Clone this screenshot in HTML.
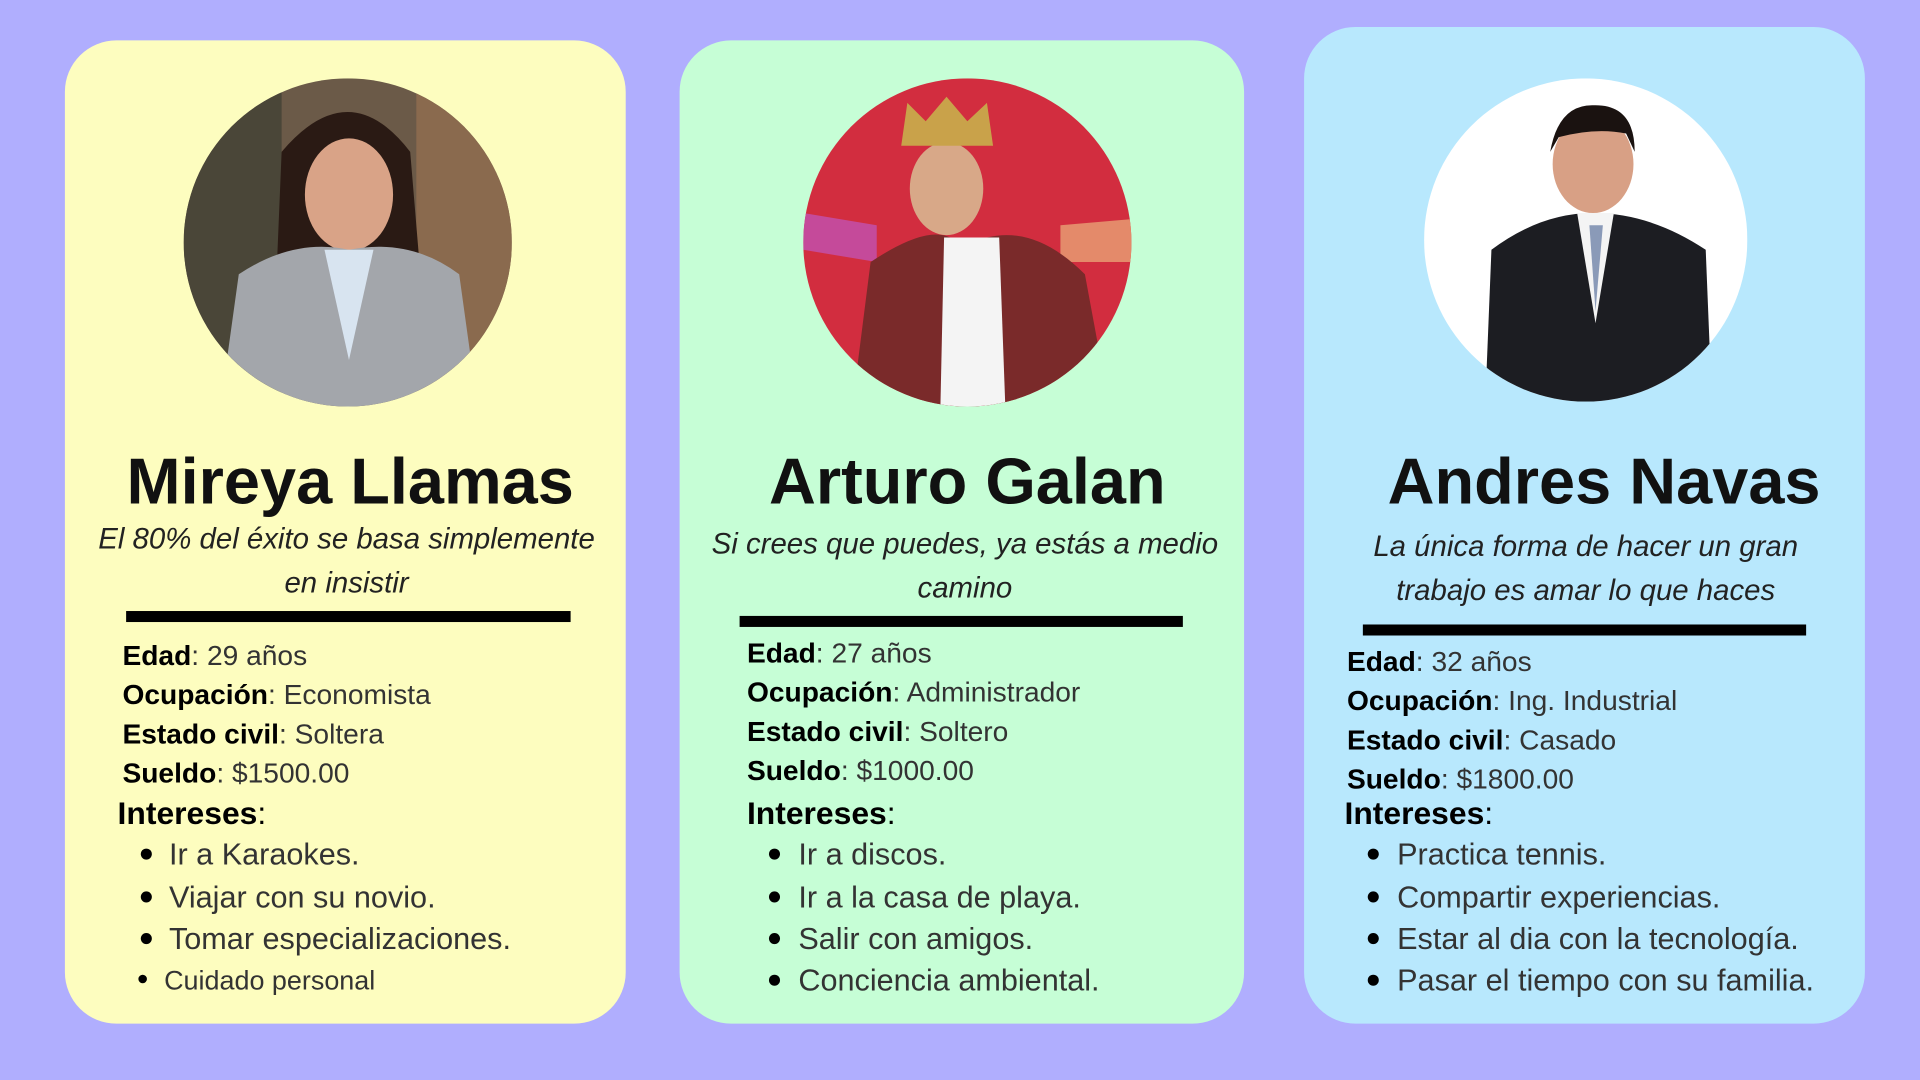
<!DOCTYPE html>
<html><head><meta charset="utf-8"><style>
html,body{margin:0;padding:0;width:1920px;height:1080px;overflow:hidden;background:#b0aefe;}
#s{position:absolute;left:0;top:0;width:1568px;height:882px;transform:scale(1.22449);transform-origin:0 0;font-family:"Liberation Sans",sans-serif;color:#111;}
.card{position:absolute;border-radius:42px;}
.a{position:absolute;white-space:nowrap;}
.name{font-weight:bold;font-size:53px;line-height:60px;text-align:center;transform:translateX(-50%);}
.q{font-style:italic;font-size:24px;line-height:36px;text-align:center;transform:translateX(-50%);color:#222;font-weight:300;}
.bar{position:absolute;height:9px;background:#000;}
.i{font-size:23px;line-height:30px;color:#333;}
.i b{color:#000;}
.h{font-size:26px;line-height:30px;font-weight:bold;color:#000;}
.li{font-size:25px;line-height:30px;color:#333;}
.dot{position:absolute;width:9px;height:9px;border-radius:50%;background:#000;}
</style></head><body><div id="s">
<div class="card" style="left:53px;top:33px;width:458px;height:803px;background:#fdfdbf"></div>
<div class="card" style="left:555px;top:33px;width:461px;height:803px;background:#c6fed6"></div>
<div class="card" style="left:1065px;top:22px;width:458px;height:814px;background:#b8e8fd"></div>

<svg class="a" style="left:150px;top:64px" width="268" height="268" viewBox="0 0 268 268">
<defs><clipPath id="c1"><circle cx="134" cy="134" r="134"/></clipPath></defs>
<g clip-path="url(#c1)"><rect width="268" height="268" fill="#6b5a48"/><rect x="0" y="0" width="80" height="268" fill="#4a4638"/><rect x="190" y="0" width="78" height="268" fill="#8a6a4e"/>
<path d="M80 60 Q135 -5 185 60 L195 180 L75 180Z" fill="#2a1a14"/>
<ellipse cx="135" cy="95" rx="36" ry="46" fill="#d9a387"/>
<path d="M30 268 L45 160 Q90 130 135 140 Q185 130 225 160 L240 268Z" fill="#a3a6ab"/>
<path d="M115 140 L135 230 L155 140Z" fill="#d8e4f0"/></g></svg>

<svg class="a" style="left:656px;top:64px" width="268" height="268" viewBox="0 0 268 268">
<defs><clipPath id="c2"><circle cx="134" cy="134" r="134"/></clipPath></defs>
<g clip-path="url(#c2)"><rect width="268" height="268" fill="#d22d3f"/>
<path d="M0 110 L60 120 L60 150 L0 140Z" fill="#c54a9a"/><path d="M210 120 L268 115 L268 150 L210 150Z" fill="#e48a6a"/>
<path d="M40 268 L55 150 Q100 120 120 130 L150 130 Q190 120 230 160 L250 268Z" fill="#7a2a2a"/>
<path d="M115 130 L160 130 L165 268 L112 268Z" fill="#f4f4f4"/>
<ellipse cx="117" cy="90" rx="30" ry="38" fill="#d8a888"/>
<path d="M80 55 L85 20 L100 35 L117 15 L134 35 L150 20 L155 55Z" fill="#c9a24a"/></g></svg>

<svg class="a" style="left:1163px;top:64px" width="264" height="264" viewBox="0 0 264 264">
<defs><clipPath id="c3"><circle cx="132" cy="132" r="132"/></clipPath></defs>
<g clip-path="url(#c3)"><rect width="264" height="264" fill="#fff"/>
<path d="M50 264 L55 140 Q95 110 138 110 Q185 110 230 140 L235 264Z" fill="#1c1d22"/>
<path d="M125 110 L140 200 L155 110Z" fill="#f4f4f4"/><path d="M135 120 L140 190 L146 120Z" fill="#8a9ab8"/>
<ellipse cx="138" cy="70" rx="33" ry="40" fill="#d8a085"/>
<path d="M103 60 Q110 20 140 22 Q172 22 172 60 L165 45 Q140 40 110 48Z" fill="#1a1210"/></g></svg>

<div class="a name" style="left:286px;top:364px">Mireya Llamas</div>
<div class="a q" style="left:283px;top:423px">El 80% del éxito se basa simplemente<br>en insistir</div>
<div class="bar" style="left:103px;top:499px;width:363px"></div>
<div class="a i" style="left:100px;top:520px"><b>Edad</b>: 29 años</div>
<div class="a i" style="left:100px;top:552px"><b>Ocupación</b>: Economista</div>
<div class="a i" style="left:100px;top:584px"><b>Estado civil</b>: Soltera</div>
<div class="a i" style="left:100px;top:616px"><b>Sueldo</b>: $1500.00</div>
<div class="a h" style="left:96px;top:649px">Intereses<span style="font-weight:normal">:</span></div>
<div class="dot" style="left:115px;top:693px"></div><div class="a li" style="left:138px;top:683px">Ir a Karaokes.</div>
<div class="dot" style="left:115px;top:728px"></div><div class="a li" style="left:138px;top:718px">Viajar con su novio.</div>
<div class="dot" style="left:115px;top:762px"></div><div class="a li" style="left:138px;top:752px">Tomar especializaciones.</div>
<div class="dot" style="left:113px;top:796px;width:7px;height:7px"></div><div class="a li" style="left:134px;top:786px;font-size:22px">Cuidado personal</div>

<div class="a name" style="left:790px;top:364px">Arturo Galan</div>
<div class="a q" style="left:788px;top:427px">Si crees que puedes, ya estás a medio<br>camino</div>
<div class="bar" style="left:604px;top:503px;width:362px"></div>
<div class="a i" style="left:610px;top:518px"><b>Edad</b>: 27 años</div>
<div class="a i" style="left:610px;top:550px"><b>Ocupación</b>: Administrador</div>
<div class="a i" style="left:610px;top:582px"><b>Estado civil</b>: Soltero</div>
<div class="a i" style="left:610px;top:614px"><b>Sueldo</b>: $1000.00</div>
<div class="a h" style="left:610px;top:649px">Intereses<span style="font-weight:normal">:</span></div>
<div class="dot" style="left:628px;top:693px"></div><div class="a li" style="left:652px;top:683px">Ir a discos.</div>
<div class="dot" style="left:628px;top:728px"></div><div class="a li" style="left:652px;top:718px">Ir a la casa de playa.</div>
<div class="dot" style="left:628px;top:762px"></div><div class="a li" style="left:652px;top:752px">Salir con amigos.</div>
<div class="dot" style="left:628px;top:796px"></div><div class="a li" style="left:652px;top:786px">Conciencia ambiental.</div>

<div class="a name" style="left:1310px;top:364px">Andres Navas</div>
<div class="a q" style="left:1295px;top:429px">La única forma de hacer un gran<br>trabajo es amar lo que haces</div>
<div class="bar" style="left:1113px;top:510px;width:362px"></div>
<div class="a i" style="left:1100px;top:525px"><b>Edad</b>: 32 años</div>
<div class="a i" style="left:1100px;top:557px"><b>Ocupación</b>: Ing. Industrial</div>
<div class="a i" style="left:1100px;top:589px"><b>Estado civil</b>: Casado</div>
<div class="a i" style="left:1100px;top:621px"><b>Sueldo</b>: $1800.00</div>
<div class="a h" style="left:1098px;top:649px">Intereses<span style="font-weight:normal">:</span></div>
<div class="dot" style="left:1117px;top:693px"></div><div class="a li" style="left:1141px;top:683px">Practica tennis.</div>
<div class="dot" style="left:1117px;top:728px"></div><div class="a li" style="left:1141px;top:718px">Compartir experiencias.</div>
<div class="dot" style="left:1117px;top:762px"></div><div class="a li" style="left:1141px;top:752px">Estar al dia con la tecnología.</div>
<div class="dot" style="left:1117px;top:796px"></div><div class="a li" style="left:1141px;top:786px">Pasar el tiempo con su familia.</div>
</div></body></html>
